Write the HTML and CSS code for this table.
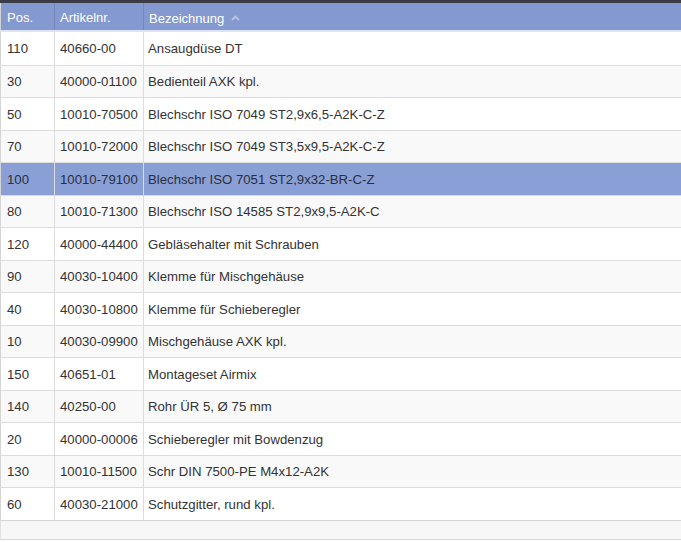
FILE: index.html
```html
<!DOCTYPE html>
<html lang="de">
<head>
<meta charset="utf-8">
<link rel="stylesheet" href="styles.css">
</head>
<body>
<div class="topbar"></div>
<table class="grid">
  <colgroup><col class="c1"><col class="c2"><col class="c3"></colgroup>
  <thead>
    <tr><th>Pos.</th><th>Artikelnr.</th><th>Bezeichnung <span class="sort"><svg width="9" height="6" viewBox="0 0 9 6"><path d="M1 5 L4.5 1.5 L8 5" fill="none" stroke="#b7c3e6" stroke-width="1.8"/></svg></span></th></tr>
  </thead>
  <tbody>
    <tr><td>110</td><td>40660-00</td><td>Ansaugdüse DT</td></tr>
    <tr><td>30</td><td>40000-01100</td><td>Bedienteil AXK kpl.</td></tr>
    <tr><td>50</td><td>10010-70500</td><td>Blechschr ISO 7049 ST2,9x6,5-A2K-C-Z</td></tr>
    <tr><td>70</td><td>10010-72000</td><td>Blechschr ISO 7049 ST3,5x9,5-A2K-C-Z</td></tr>
    <tr class="sel"><td>100</td><td>10010-79100</td><td>Blechschr ISO 7051 ST2,9x32-BR-C-Z</td></tr>
    <tr><td>80</td><td>10010-71300</td><td>Blechschr ISO 14585 ST2,9x9,5-A2K-C</td></tr>
    <tr><td>120</td><td>40000-44400</td><td>Gebläsehalter mit Schrauben</td></tr>
    <tr><td>90</td><td>40030-10400</td><td>Klemme für Mischgehäuse</td></tr>
    <tr><td>40</td><td>40030-10800</td><td>Klemme für Schieberegler</td></tr>
    <tr><td>10</td><td>40030-09900</td><td>Mischgehäuse AXK kpl.</td></tr>
    <tr><td>150</td><td>40651-01</td><td>Montageset Airmix</td></tr>
    <tr><td>140</td><td>40250-00</td><td>Rohr ÜR 5, Ø 75 mm</td></tr>
    <tr><td>20</td><td>40000-00006</td><td>Schieberegler mit Bowdenzug</td></tr>
    <tr><td>130</td><td>10010-11500</td><td>Schr DIN 7500-PE M4x12-A2K</td></tr>
    <tr><td>60</td><td>40030-21000</td><td>Schutzgitter, rund kpl.</td></tr>
  </tbody>
</table>
<div class="footer"></div>
</body>
</html>
```
FILE: styles.css
```css
html, body { margin: 0; padding: 0; background: #ffffff; }
body { font-family: "Liberation Sans", Arial, sans-serif; font-size: 13.2px; color: #333333; width: 681px; overflow: hidden; }
.topbar { height: 3px; background: #3b3b47; }
.grid { border-collapse: collapse; width: 100%; table-layout: fixed; border-left: 1px solid #d4d4d4; }
.c1 { width: 54px; }
.c2 { width: 89px; }
.grid th { background: #8499cf; color: #ffffff; font-weight: normal; font-size: 13px; text-align: left; height: 26px; padding: 1px 0 0 5px; border-left: 1px solid #7486ba; border-bottom: 2px solid #dde3f2; }
.grid th:first-child { border-left: none; padding-left: 6px; }
.sort { display: inline-block; margin-left: 3px; vertical-align: 2px; }
.grid td { height: 30.5px; padding: 1px 0 0 5px; border-top: 1px solid #dcdcdc; border-left: 1px solid #dcdcdc; white-space: nowrap; }
.grid td:first-child { border-left: none; padding-left: 6px; }
.grid td:last-child { padding-left: 4px; }
.grid tbody tr:first-child td { border-top: none; height: 31.5px; }
.grid tbody tr:nth-child(even) td { background: #f9f9f9; }
.grid tbody tr.sel td { background: #8a9fd6; color: #2b2f3a; }
.grid tbody tr:last-child td { border-bottom: 1px solid #d4d4d4; }
.footer { height: 18px; background: #f7f7f7; border-bottom: 1px solid #d6d6d6; border-left: 1px solid #e0e0e0; }
```
